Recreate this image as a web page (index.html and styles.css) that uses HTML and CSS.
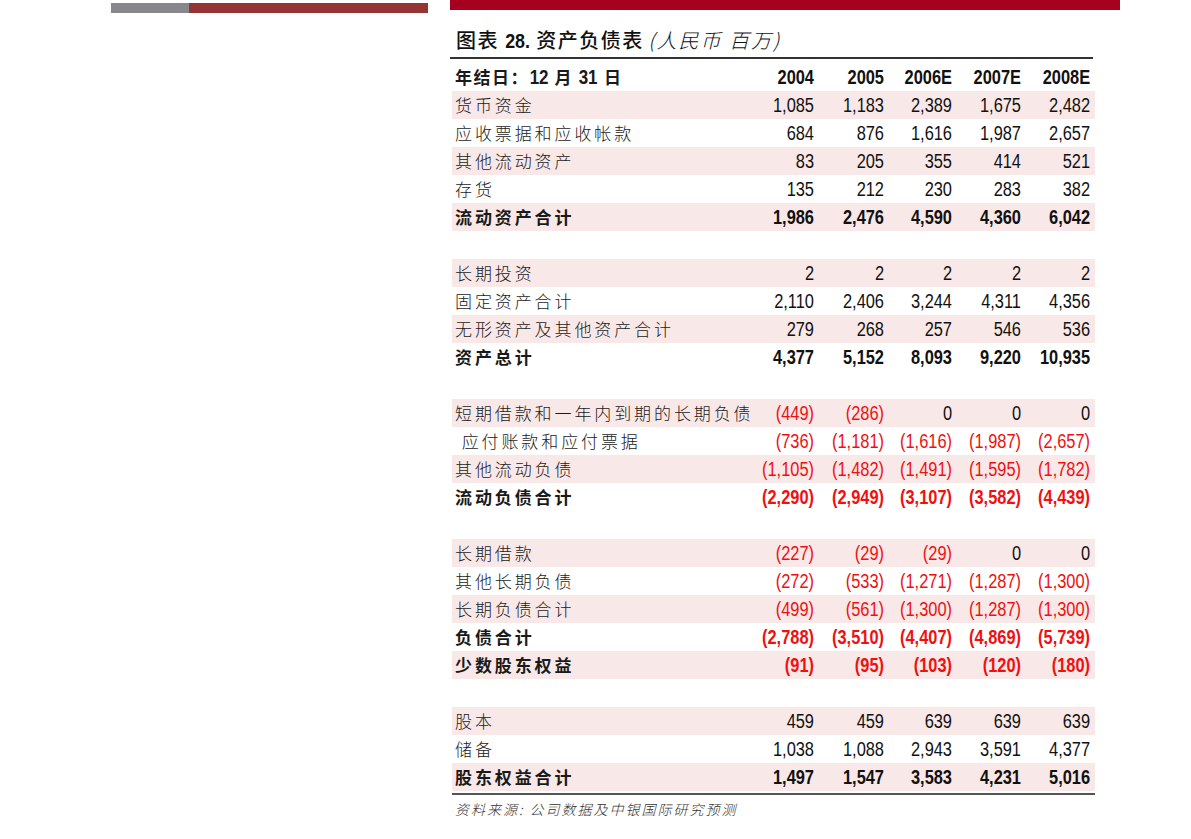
FILE: index.html
```html
<!DOCTYPE html>
<html lang="zh">
<head>
<meta charset="utf-8">
<link rel="stylesheet" href="styles.css">
</head>
<body>
<div class="page">
  <div class="side">
    <div class="side-bar"><span class="grey"></span><span class="red"></span></div>
  </div>
  <div class="main">
    <div class="top-bar"></div>
    <h1 class="title"><b>图表 <span class="num">28.</span> 资产负债表</b> <i>(人民币 百万)</i></h1>
    <div class="table">
      <div class="row head"><div class="lbl">年结日：<span class="num">12</span> 月 <span class="num">31</span> 日</div><div>2004</div><div>2005</div><div>2006E</div><div>2007E</div><div>2008E</div></div>
      <div class="row pink"><div class="lbl">货币资金</div><div>1,085</div><div>1,183</div><div>2,389</div><div>1,675</div><div>2,482</div></div>
      <div class="row"><div class="lbl">应收票据和应收帐款</div><div>684</div><div>876</div><div>1,616</div><div>1,987</div><div>2,657</div></div>
      <div class="row pink"><div class="lbl">其他流动资产</div><div>83</div><div>205</div><div>355</div><div>414</div><div>521</div></div>
      <div class="row"><div class="lbl">存货</div><div>135</div><div>212</div><div>230</div><div>283</div><div>382</div></div>
      <div class="row pink bold"><div class="lbl">流动资产合计</div><div>1,986</div><div>2,476</div><div>4,590</div><div>4,360</div><div>6,042</div></div>
      <div class="row blank"></div>
      <div class="row pink"><div class="lbl">长期投资</div><div>2</div><div>2</div><div>2</div><div>2</div><div>2</div></div>
      <div class="row"><div class="lbl">固定资产合计</div><div>2,110</div><div>2,406</div><div>3,244</div><div>4,311</div><div>4,356</div></div>
      <div class="row pink"><div class="lbl">无形资产及其他资产合计</div><div>279</div><div>268</div><div>257</div><div>546</div><div>536</div></div>
      <div class="row bold"><div class="lbl">资产总计</div><div>4,377</div><div>5,152</div><div>8,093</div><div>9,220</div><div>10,935</div></div>
      <div class="row blank"></div>
      <div class="row pink"><div class="lbl">短期借款和一年内到期的长期负债</div><div class="neg">(449)</div><div class="neg">(286)</div><div>0</div><div>0</div><div>0</div></div>
      <div class="row"><div class="lbl">&nbsp;应付账款和应付票据</div><div class="neg">(736)</div><div class="neg">(1,181)</div><div class="neg">(1,616)</div><div class="neg">(1,987)</div><div class="neg">(2,657)</div></div>
      <div class="row pink"><div class="lbl">其他流动负债</div><div class="neg">(1,105)</div><div class="neg">(1,482)</div><div class="neg">(1,491)</div><div class="neg">(1,595)</div><div class="neg">(1,782)</div></div>
      <div class="row bold"><div class="lbl">流动负债合计</div><div class="neg">(2,290)</div><div class="neg">(2,949)</div><div class="neg">(3,107)</div><div class="neg">(3,582)</div><div class="neg">(4,439)</div></div>
      <div class="row blank"></div>
      <div class="row pink"><div class="lbl">长期借款</div><div class="neg">(227)</div><div class="neg">(29)</div><div class="neg">(29)</div><div>0</div><div>0</div></div>
      <div class="row"><div class="lbl">其他长期负债</div><div class="neg">(272)</div><div class="neg">(533)</div><div class="neg">(1,271)</div><div class="neg">(1,287)</div><div class="neg">(1,300)</div></div>
      <div class="row pink"><div class="lbl">长期负债合计</div><div class="neg">(499)</div><div class="neg">(561)</div><div class="neg">(1,300)</div><div class="neg">(1,287)</div><div class="neg">(1,300)</div></div>
      <div class="row bold"><div class="lbl">负债合计</div><div class="neg">(2,788)</div><div class="neg">(3,510)</div><div class="neg">(4,407)</div><div class="neg">(4,869)</div><div class="neg">(5,739)</div></div>
      <div class="row pink bold"><div class="lbl">少数股东权益</div><div class="neg">(91)</div><div class="neg">(95)</div><div class="neg">(103)</div><div class="neg">(120)</div><div class="neg">(180)</div></div>
      <div class="row blank"></div>
      <div class="row pink"><div class="lbl">股本</div><div>459</div><div>459</div><div>639</div><div>639</div><div>639</div></div>
      <div class="row"><div class="lbl">储备</div><div>1,038</div><div>1,088</div><div>2,943</div><div>3,591</div><div>4,377</div></div>
      <div class="row pink bold"><div class="lbl">股东权益合计</div><div>1,497</div><div>1,547</div><div>3,583</div><div>4,231</div><div>5,016</div></div>
    </div>
    <p class="source">资料来源: 公司数据及中银国际研究预测</p>
  </div>
</div>
</body>
</html>
```

FILE: styles.css
```css
html, body {
  margin: 0;
  padding: 0;
  background: #ffffff;
}
.page {
  display: flex;
  width: 1191px;
  height: 839px;
  overflow: hidden;
  font-family: "Liberation Sans", "Noto Sans CJK SC", sans-serif;
  color: #111;
}
.side {
  width: 317px;
  margin-left: 111px;
  padding-top: 3px;
}
.side-bar {
  display: flex;
  height: 10px;
}
.side-bar .grey {
  width: 78px;
  background: #88878c;
}
.side-bar .red {
  flex: 1;
  background: #933533;
}
.main {
  margin-left: 22px;
  width: 670px;
}
.top-bar {
  height: 10px;
  background: #a6001f;
}
.title {
  margin: 0 27px 0 0;
  height: 49px;
  border-bottom: 2px solid #333;
  box-sizing: border-box;
  font-size: 20px;
  line-height: 20px;
  padding: 20px 0 0 6px;
  font-weight: normal;
  font-family: "Noto Sans CJK SC", sans-serif;
  white-space: nowrap;
}
.title b {
  font-weight: 500;
  letter-spacing: 1.5px;
}
.title .num {
  display: inline-block;
  font-family: "Liberation Sans", sans-serif;
  font-weight: 700;
  font-size: 21px;
  letter-spacing: 0;
  transform: scaleX(0.85);
  margin: 0 -2px;
}
.title i {
  font-style: italic;
  font-weight: 300;
  letter-spacing: 2px;
}
.table {
  width: 643px;
  margin-left: 2px;
  padding-top: 4px;
}
.row {
  display: grid;
  grid-template-columns: 292px 70px 70px 68px 69px 74px;
  height: 28px;
  align-items: center;
  font-size: 20px;
}
.row > div {
  text-align: right;
  white-space: nowrap;
  line-height: 28px;
  transform: scaleX(0.82);
  transform-origin: right center;
}
.row > div:last-child {
  padding-right: 6px;
}
.row > .lbl {
  text-align: left;
  padding-left: 3px;
  font-family: "Noto Sans CJK SC", sans-serif;
  font-size: 17px;
  letter-spacing: 2.9px;
  font-weight: 300;
  color: #1a1a1a;
  transform: none;
}
.row.pink {
  background: #f9e8e8;
}
.row.bold > div {
  font-weight: 700;
}
.row.bold > .lbl {
  font-weight: 700;
}
.row.head > div {
  font-weight: 700;
}
.row.head > .lbl {
  font-weight: 700;
  letter-spacing: 1.5px;
}
.row.head .num {
  display: inline-block;
  font-family: "Liberation Sans", sans-serif;
  font-size: 20px;
  letter-spacing: 0;
  transform: scaleX(0.85);
  margin: 0 -1px;
}
.neg {
  color: #f01010;
}
.source {
  margin: 2px 0 0 2px;
  width: 643px;
  border-top: 2px solid #555;
  padding: 4px 0 0 3px;
  font-family: "Noto Sans CJK SC", sans-serif;
  font-style: italic;
  font-size: 14px;
  letter-spacing: 2px;
  font-weight: 300;
  color: #333;
  box-sizing: border-box;
}
```
